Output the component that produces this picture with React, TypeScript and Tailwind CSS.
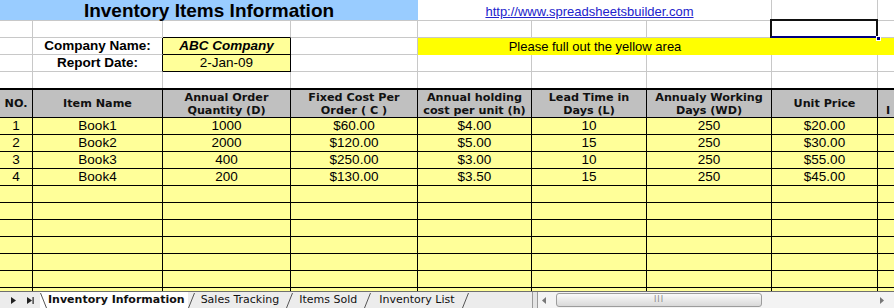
const cols = "grid grid-cols-[33px_130px_128px_127px_114px_115px_125px_106px_16px]";
const arial = "font-['Liberation_Sans',Arial,sans-serif]";
const gl = "border-r border-b border-[#c8c8c8]";

const items = [
  ["1", "Book1", "1000", "$60.00", "$4.00", "10", "250", "$20.00"],
  ["2", "Book2", "2000", "$120.00", "$5.00", "15", "250", "$30.00"],
  ["3", "Book3", "400", "$250.00", "$3.00", "10", "250", "$55.00"],
  ["4", "Book4", "200", "$130.00", "$3.50", "15", "250", "$45.00"],
];

const headers = [
  ["NO."],
  ["Item Name"],
  ["Annual Order", "Quantity (D)"],
  ["Fixed Cost Per", "Order ( C )"],
  ["Annual holding", "cost per unit (h)"],
  ["Lead Time in", "Days (L)"],
  ["Annualy Working", "Days (WD)"],
  ["Unit Price"],
];

function Slant({ back }: { back?: boolean }) {
  return (
    <svg width="7" height="17" viewBox="0 0 7 17" className="shrink-0">
      {back ? (
        <path d="M0.5 1 L6.5 16" stroke="#555" strokeWidth="1" fill="none" />
      ) : (
        <path d="M6.5 1 L0.5 16" stroke="#555" strokeWidth="1" fill="none" />
      )}
    </svg>
  );
}

export default function App() {
  const rows = Array.from({ length: 11 }, (_, i) => items[i] ?? ["", "", "", "", "", "", "", ""]);

  return (
    <div className="w-[894px] h-[308px] overflow-hidden bg-white text-black flex flex-col">
      {/* Top sheet area */}
      <div className={`${cols} grid-rows-[21px_17px_17px_17px_16px] ${arial} text-[13.5px]`}>
        {/* row 1 */}
        <div className="col-span-4 bg-[#99ccff] border-b border-[#c8c8c8] flex items-center justify-center text-[19px] font-bold leading-none">
          Inventory Items Information
        </div>
        <div className="col-span-3 border-r border-b border-[#c8c8c8] flex items-center justify-center pt-[3px] pr-[10px]">
          <span className="underline text-[#2222cc] leading-none text-[13px]">http://www.spreadsheetsbuilder.com</span>
        </div>
        <div className={gl} />
        <div className="border-b border-[#c8c8c8]" />

        {/* row 2 */}
        <div className={gl} />
        <div className={gl} />
        <div className="border-r border-b border-r-[#c8c8c8] border-b-black" />
        <div className={gl} />
        <div className={gl} />
        <div className={gl} />
        <div className={gl} />
        <div className={`${gl} relative`}>
          <div className="absolute left-[-2px] top-[-2px] w-[108px] h-[19px] border-2 border-[#111] border-b-[#000080]" />
          <div className="absolute right-[-4px] bottom-[-4px] w-[5px] h-[5px] bg-[#000080] border border-white" />
        </div>
        <div className="border-b border-[#c8c8c8]" />

        {/* row 3 */}
        <div className={gl} />
        <div className="border-r border-b border-r-black border-b-[#c8c8c8] flex items-center justify-center font-bold">
          Company Name:
        </div>
        <div className="border-r border-b border-black bg-[#ffff99] flex items-center justify-center font-bold italic">
          ABC Company
        </div>
        <div className={gl} />
        <div className="col-span-5 bg-[#ffff00] flex items-center">
          <div className="w-[354px] text-center text-[13px]">Please full out the yellow area</div>
        </div>

        {/* row 4 */}
        <div className={gl} />
        <div className="border-r border-b border-r-black border-b-[#c8c8c8] flex items-center justify-center font-bold">
          Report Date:
        </div>
        <div className="border-r border-b border-black bg-[#ffff99] flex items-center justify-center">2-Jan-09</div>
        <div className={gl} />
        <div className={gl} />
        <div className={gl} />
        <div className={gl} />
        <div className={gl} />
        <div className="border-b border-[#c8c8c8]" />

        {/* row 5 */}
        <div className="border-r border-[#c8c8c8]" />
        <div className="border-r border-[#c8c8c8]" />
        <div className="border-r border-[#c8c8c8]" />
        <div className="border-r border-[#c8c8c8]" />
        <div className="border-r border-[#c8c8c8]" />
        <div className="border-r border-[#c8c8c8]" />
        <div className="border-r border-[#c8c8c8]" />
        <div className="border-r border-[#c8c8c8]" />
        <div />
      </div>

      {/* Table */}
      <div className="h-[203px] overflow-hidden">
        <div className={`${cols} h-[30px] border-t-2 border-black bg-[#c0c0c0] font-['DejaVu_Sans',Verdana,sans-serif] font-bold text-[11.2px] leading-[13px] text-[#111]`}>
          {headers.map((h, i) => (
            <div key={i} className="border-r border-b border-black flex flex-col items-center justify-center text-center whitespace-nowrap overflow-hidden">
              {h.map((line) => (
                <span key={line}>{line}</span>
              ))}
            </div>
          ))}
          <div className="border-b border-black flex flex-col justify-center pl-[8px] overflow-hidden">
            <span>&nbsp;</span>
            <span>I</span>
          </div>
        </div>
        {rows.map((r, i) => (
          <div key={i} className={`${cols} h-[17px] ${arial} text-[13.5px] leading-none`}>
            {r.map((v, j) => (
              <div key={j} className="border-r border-b border-black bg-[#ffff99] flex items-center justify-center">
                {v}
              </div>
            ))}
            <div className="border-b border-black bg-[#ffff99]" />
          </div>
        ))}
      </div>

      {/* Sheet tabs + horizontal scrollbar */}
      <div className="h-[17px] flex bg-[#ececec] border-t border-[#6f6f6f] font-['DejaVu_Sans',Tahoma,sans-serif] text-[11px] text-[#111]">
        <div className="w-[40px] flex items-center shrink-0">
          <svg width="5" height="7" viewBox="0 0 5 7" className="ml-[11px]">
            <path d="M0 0 L5 3.5 L0 7 Z" fill="#222" />
          </svg>
          <svg width="7" height="7" viewBox="0 0 7 7" className="ml-[11px]">
            <path d="M0 0 L5 3.5 L0 7 Z" fill="#222" />
            <rect x="5.5" y="0" width="1.2" height="7" fill="#222" />
          </svg>
        </div>
        <div className="w-[492px] flex items-stretch shrink-0">
          <div className="flex items-stretch bg-white">
            <Slant back />
            <span className="flex items-center pl-[1px] pr-[3px] font-bold">Inventory Information</span>
          </div>
          <Slant />
          <span className="flex items-center pl-[6px] pr-[7px]">Sales Tracking</span>
          <Slant />
          <span className="flex items-center pl-[6px] pr-[7px]">Items Sold</span>
          <Slant />
          <span className="flex items-center pl-[8px] pr-[7px]">Inventory List</span>
          <Slant />
        </div>
        <div className="w-[6px] shrink-0 bg-[#e4e4e4] border-l border-r border-[#9a9a9a]" />
        <div className="flex-1 flex items-center bg-[#f3f3f3]">
          <svg width="4" height="7" viewBox="0 0 4 7" className="ml-[4px]">
            <path d="M4 0 L0 3.5 L4 7 Z" fill="#777" />
          </svg>
          <div className="ml-[10px] w-[206px] h-[14px] rounded-[3px] border border-[#9c9c9c] bg-gradient-to-b from-[#fafafa] to-[#d9d9d9] flex items-center justify-center">
            <span className="text-[8px] leading-none tracking-[1px] text-[#888] font-['DejaVu_Sans',sans-serif]">III</span>
          </div>
          <div className="flex-1" />
          <svg width="4" height="7" viewBox="0 0 4 7" className="mr-[10px]">
            <path d="M0 0 L4 3.5 L0 7 Z" fill="#777" />
          </svg>
        </div>
      </div>
    </div>
  );
}
